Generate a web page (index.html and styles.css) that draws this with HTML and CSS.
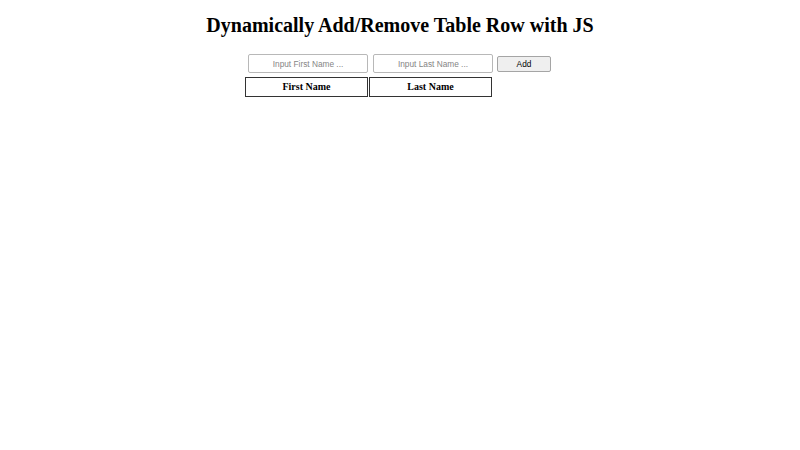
FILE: index.html
```html
<!DOCTYPE html>
<html>
<head>
<meta charset="utf-8">
<link rel="stylesheet" href="styles.css">
</head>
<body>
<h1 class="title">Dynamically Add/Remove Table Row with JS</h1>
<div class="wrap">
  <div class="form">
    <input class="field" type="text" placeholder="Input First Name ...">
    <input class="field" type="text" placeholder="Input Last Name ...">
    <button class="btn">Add</button>
  </div>
  <table class="tbl">
    <thead>
      <tr><th class="head">First Name</th><th class="head">Last Name</th></tr>
    </thead>
  </table>
</div>
</body>
</html>
```
FILE: styles.css
```css
body {
  margin: 8px;
  font-family: "Liberation Serif", serif;
  background: #fff;
  color: #000;
}
.title {
  margin: 0;
  font-size: 20px;
  line-height: 34px;
  text-align: center;
}
.wrap {
  width: 310px;
  margin: 12px auto 0;
}
.form {
  display: flex;
  align-items: center;
  padding-left: 3px;
  height: 19px;
}
.field {
  box-sizing: border-box;
  width: 120px;
  height: 19px;
  margin: 0 5px 0 0;
  padding: 0 4px;
  border: 1px solid #b8b8b8;
  border-radius: 2px;
  font-family: "Liberation Sans", sans-serif;
  font-size: 8.3px;
  text-align: center;
}
.field::placeholder {
  color: #858585;
}
.btn {
  box-sizing: border-box;
  width: 54px;
  height: 16px;
  margin: 0 0 0 -1px;
  padding: 0;
  border: 1px solid #a5a5a5;
  border-radius: 2px;
  background: #efefef;
  font-family: "Liberation Sans", sans-serif;
  font-size: 8.3px;
  color: #000;
}
.tbl {
  margin: 3px 0 0 -1px;
  border-collapse: separate;
  border-spacing: 1px;
}
.head {
  box-sizing: border-box;
  width: 123px;
  height: 20px;
  padding: 0;
  border: 1px solid #333;
  font-size: 10px;
  font-weight: bold;
  line-height: 16px;
}
```
